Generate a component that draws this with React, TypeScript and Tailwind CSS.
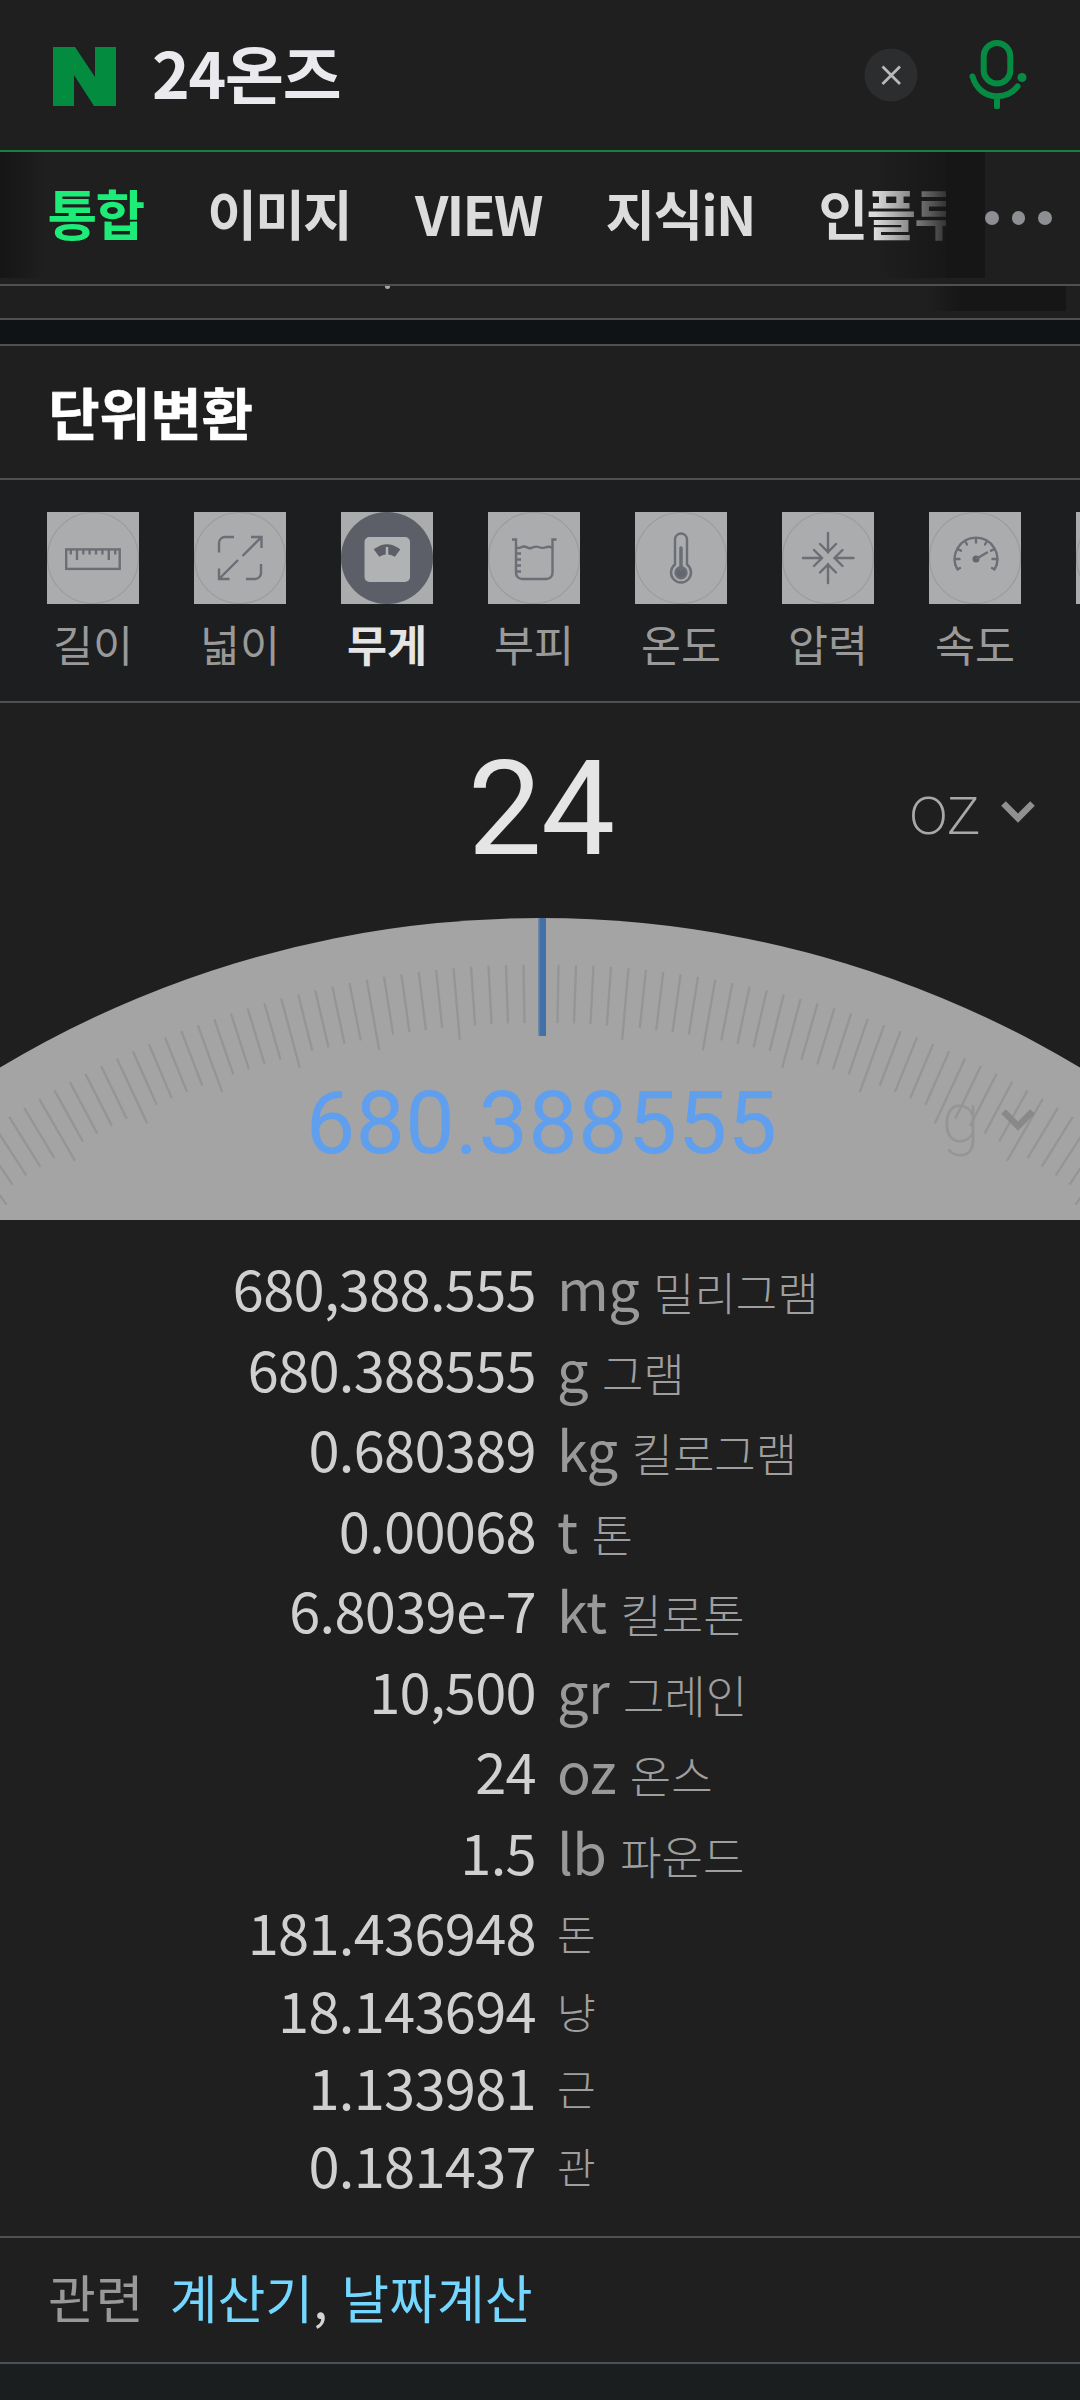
import clsx from "clsx";
import type { ReactNode } from "react";

interface Category {
	id: string;
	label: string;
	icon: ReactNode;
}

interface Conversion {
	value: string;
	symbol?: string;
	name: string;
}

const tabs = ["통합", "이미지", "VIEW", "지식iN", "인플루"];

const conversions: Conversion[] = [
	{ value: "680,388.555", symbol: "mg", name: "밀리그램" },
	{ value: "680.388555", symbol: "g", name: "그램" },
	{ value: "0.680389", symbol: "kg", name: "킬로그램" },
	{ value: "0.00068", symbol: "t", name: "톤" },
	{ value: "6.8039e-7", symbol: "kt", name: "킬로톤" },
	{ value: "10,500", symbol: "gr", name: "그레인" },
	{ value: "24", symbol: "oz", name: "온스" },
	{ value: "1.5", symbol: "lb", name: "파운드" },
	{ value: "181.436948", name: "돈" },
	{ value: "18.143694", name: "냥" },
	{ value: "1.133981", name: "근" },
	{ value: "0.181437", name: "관" },
];

const categories: Category[] = [
	{
		id: "length",
		label: "길이",
		icon: (
			<>
				<rect height="19.5" width="53.5" x="19.2" y="37.4" />
				<path d="M23.8 38v4.5M30 38v10M36.3 38v4.5M42.6 38v4.5M49 38v4.5M55.4 38v4.5M61.8 38v10M68.2 38v4.5" />
			</>
		),
	},
	{
		id: "area",
		label: "넓이",
		icon: (
			<>
				<path d="M40 25h-9a6 6 0 0 0-6 6v9.500M52 67h9a6 6 0 0 0 6-6v-9" />
				<path d="M48.500 44 67 25.500M57 25h10.500v11M44 48 25 67M25 56.500v10.500h10.500" />
			</>
		),
	},
	{
		id: "weight",
		label: "무게",
		icon: (
			<>
				<circle cx="46" cy="46" fill="#5c5f68" r="46" stroke="none" />
				<rect
					fill="#b1b2b3"
					height="45"
					rx="5"
					stroke="none"
					width="45.500"
					x="23.500"
					y="25"
				/>
				<path
					d="M32.700 37.300Q46 27 59.300 37.300L54 44.800Q46 39.500 38.300 44.800Z"
					fill="#5c5f68"
					stroke="none"
				/>
				<path d="M46 35v9" stroke="#b1b2b3" strokeWidth="2.500" />
			</>
		),
	},
	{
		id: "volume",
		label: "부피",
		icon: (
			<>
				<path d="M24 27.500h4V61a6 6 0 0 0 6 6h24.500a6 6 0 0 0 6-6V27.500h4" />
				<path d="M28 35.500c3 2 5-1 8-1s4 2.500 7 1.500 5-2 7.500-1 4 1.500 6.500.5 4.500-1 7.500 0M28 41.500h5M28 47.500h5M28 53.500h5M28 59.500h5" />
			</>
		),
	},
	{
		id: "temperature",
		label: "온도",
		icon: (
			<>
				<path d="M40 52.500V27.500a6 6 0 0 1 12 0v25a10 10 0 1 1-12 0z" />
				<circle cx="46" cy="60.700" fill="#63666e" r="5.500" />
				<path d="M46 36v22" strokeLinecap="round" strokeWidth="3.500" />
			</>
		),
	},
	{
		id: "pressure",
		label: "압력",
		icon: (
			<path
				d="M46 21v19.500M38 32l8 8 8-8M46 71V52M38 60.500l8-8 8 8M21 46h19M32 38l8 8-8 8M71.500 46H52.500M60.500 38l-8 8 8 8"
				strokeLinecap="round"
			/>
		),
	},
	{
		id: "speed",
		label: "속도",
		icon: (
			<>
				<path
					d="M28.500 57.500A21.300 21.300 0 1 1 65.500 57.500M28.500 57.500l2.500-1.500M65.500 57.500 63 56M26 47h4.500M68 47h-4.500M28.500 37l3.500 1.700M65.500 37 62 38.700M36 29l2 3.500M58 29l-2 3.500M47 26v4.500"
					strokeLinecap="round"
				/>
				<circle cx="47" cy="47" fill="#63666e" r="3.500" stroke="none" />
				<path d="M48 46.500 58 40.500" strokeLinecap="round" />
			</>
		),
	},
	{ id: "time", label: "", icon: null },
];

// dial geometry, in px of the 1080 wide panel
const DIAL = { cx: 541, cy: 1050, outer: 1003.5, inner: 945, innerLong: 932 };
const ticks = Array.from({ length: 81 }, (_, i) => i - 40).filter(
	(deg) => deg !== 0
);

function CategoryIcon({ children }: { children: ReactNode }) {
	return (
		<svg
			className="size-[92px] bg-[#abacae]"
			fill="none"
			stroke="#6b6e75"
			strokeWidth="2.4"
			viewBox="0 0 92 92"
		>
			<circle cx="46" cy="46" r="45.500" stroke="#999b9f" strokeWidth="1.2" />
			{children}
		</svg>
	);
}

function UnitSelect({ unit, muted }: { unit: string; muted?: boolean }) {
	return (
		<div
			className={clsx(
				"flex items-center justify-end font-[Roboto] font-extralight text-[70px] leading-[80px] tracking-[-1px]",
				muted ? "text-[#959595]" : "text-[#a8a8a8]"
			)}
		>
			{unit}
			<svg
				className="mt-[3px] ml-[22px] h-[22px] w-[34px]"
				fill="none"
				viewBox="0 0 34 22"
			>
				<path
					d="M2.500 2.500 17 17.200 31.500 2.500"
					stroke={muted ? "#88898b" : "#8f9091"}
					strokeWidth="6.500"
				/>
			</svg>
		</div>
	);
}

function Header() {
	return (
		<header className="flex h-[152px] items-center border-[#15803f] border-b-2 pr-[52px] pl-[53px]">
			<svg className="mt-[3px] h-[59px] w-[63px]" viewBox="0 0 63 59">
				<path d="M0 0H22L42 30V0H63V59H41L21 28V59H0Z" fill="#038c40" />
			</svg>
			<div className="mt-[-8px] ml-[36px] flex-1 font-bold text-[#eae9ee] text-[64px] leading-[96px] tracking-[-1.2px]">
				24온즈
			</div>
			<svg className="size-[54px]" fill="none" viewBox="0 0 54 54">
				<circle cx="27" cy="27" fill="#2c2d2e" r="26.500" />
				<path
					d="m18.500 18.500 17.500 17.500M36 18.500 18.500 36"
					stroke="#b9b9b9"
					strokeWidth="2.800"
				/>
			</svg>
			<svg
				className="mt-[-2px] ml-[51px] h-[70px] w-[59px]"
				fill="none"
				stroke="#068c42"
				strokeLinecap="round"
				strokeWidth="6"
				viewBox="0 0 59 70"
			>
				<rect height="40.500" rx="13.300" width="26.600" x="14.700" y="4" />
				<path d="M3.500 37.500C7 49.500 16 57.200 28 57.200C36.500 57.200 44 53.500 48.500 47.500M28 58v9.500" />
				<circle cx="53" cy="38.500" fill="#068c42" r="4.500" stroke="none" />
			</svg>
		</header>
	);
}

function TabBar() {
	return (
		<nav className="relative flex h-[134px] border-[#4e5053] border-b-2">
			<div className="flex w-[985px] gap-[64px] overflow-hidden whitespace-nowrap pt-[19px] pl-[47.5px] font-bold text-[#dcdcdc] text-[54px] leading-[84px] tracking-[-1.8px]">
				{tabs.map((tab, i) => (
					<span className={clsx(i === 0 && "text-[#1eec79]")} key={tab}>
						{tab}
					</span>
				))}
			</div>
			<div className="absolute top-0 left-0 h-[126px] w-[45px] bg-linear-to-r from-[#151515] to-transparent" />
			<div className="absolute top-0 left-[875px] flex h-[126px] w-[110px]">
				<div className="w-[71px] bg-linear-to-r from-[#161616]/0 to-[#161616]/85" />
				<div className="flex-1 bg-[#161616]" />
			</div>
			<div className="absolute top-[59px] left-[985px] flex gap-[13px]">
				<i className="size-[13.5px] rounded-full bg-[#8e8f93]" />
				<i className="size-[13.5px] rounded-full bg-[#8e8f93]" />
				<i className="size-[13.5px] rounded-full bg-[#8e8f93]" />
			</div>
		</nav>
	);
}

function Dial() {
	return (
		<svg
			className="absolute inset-0 h-[302px] w-[1080px]"
			viewBox="0 0 1080 302"
		>
			<circle cx="540" cy="1050" fill="#a4a4a4" r="1050" />
			<g stroke="#959595" strokeWidth="2.3">
				{ticks.map((deg) => (
					<line
						key={deg}
						transform={`rotate(${deg} ${DIAL.cx} ${DIAL.cy})`}
						x1={DIAL.cx}
						x2={DIAL.cx}
						y1={DIAL.cy - DIAL.outer}
						y2={DIAL.cy - (deg % 5 === 0 ? DIAL.innerLong : DIAL.inner)}
					/>
				))}
			</g>
			<rect fill="#7089a4" height="118" width="2" x="538" />
			<rect fill="#4470a8" height="118" width="6.500" x="539.500" />
		</svg>
	);
}

export default function App() {
	return (
		<div className="flex h-[2400px] w-[1080px] flex-col overflow-hidden bg-[#1f1f1f] font-['Noto_Sans_CJK_KR',sans-serif]">
			<Header />
			<TabBar />

			{/* tail of the previous card, scrolled under the tab bar */}
			<div className="flex h-[34px] items-start justify-end border-[#4e5053] border-b-2 pr-[14px]">
				<i className="mr-[537px] h-[3px] w-[5px] rounded-b-full bg-[#a8a8a8]" />
				<div className="h-[25px] w-[139px] bg-linear-to-r from-transparent to-[#161616] to-25%" />
			</div>
			<div className="h-6 bg-[#0f1316]" />

			<h2 className="h-[136px] border-[#4e5053] border-y-2 pt-[23px] pl-[48.5px] font-bold text-[55.5px] text-white leading-[84px] [-webkit-text-stroke:0.7px_white]">
				단위변환
			</h2>

			<div className="flex h-[223px] gap-[55px] overflow-hidden border-[#4e5053] border-b-2 bg-[#1d1e20] pt-8 pl-[47px]">
				{categories.map(({ id, label, icon }) => (
					<div className="flex w-[92px] shrink-0 flex-col items-center" key={id}>
						<CategoryIcon>{icon}</CategoryIcon>
						<span
							className={clsx(
								"mt-[8px] whitespace-nowrap text-[43.5px] leading-[64px]",
								id === "weight"
									? "font-bold text-[#e5e5e5]"
									: "text-[#999]"
							)}
						>
							{label}
						</span>
					</div>
				))}
			</div>

			<div className="relative flex h-[215px] items-center justify-center pb-[3px] pl-[2px] font-[Roboto] text-[#e5e5e5] text-[132px] leading-[150px] tracking-[-1px]">
				24
				<div className="absolute top-[67px] right-[45px]">
					<UnitSelect unit="oz" />
				</div>
			</div>

			<div className="relative h-[302px]">
				<Dial />
				<div className="relative pt-[153px] pl-[3px] text-center font-[Roboto] text-[#609fed] text-[88px] leading-[104px] tracking-[0.3px]">
					680.388555
				</div>
				<div className="absolute top-[160px] right-[45px]">
					<UnitSelect muted unit="g" />
				</div>
			</div>

			<ul className="h-[1016px] pt-[27px]">
				{conversions.map(({ value, symbol, name }) => (
					<li
						className={clsx(
							"flex items-baseline text-[56px] leading-[80.5px] tracking-[-0.7px]",
							symbol ? "h-[80.5px]" : "h-[77.5px]"
						)}
						key={name}
					>
						<span className="w-[536px] text-right text-[#d0d0d0]">{value}</span>
						<span className="ml-[21px] text-[#999]">
							{symbol}
							<span
								className={clsx(
									"font-light text-[#9f9f9f] leading-none tracking-normal",
									symbol
										? "ml-[14px] text-[45px]"
										: "relative top-[-4px] text-[42px]"
								)}
							>
								{name}
							</span>
						</span>
					</li>
				))}
			</ul>

			<div className="flex h-[128px] items-center border-[#4e5053] border-y-2 pb-[6px] pl-[48px] text-[52px] leading-[76px]">
				<span className="text-[#999]">관련</span>
				<p className="ml-[26px] text-[#d4d4d4]">
					<a className="text-[#73d7ff]">계산기</a>,{" "}
					<a className="ml-[2px] text-[#73d7ff]">날짜계산</a>
				</p>
			</div>
			<div className="flex-1 bg-[#1a1e1f]" />
		</div>
	);
}
